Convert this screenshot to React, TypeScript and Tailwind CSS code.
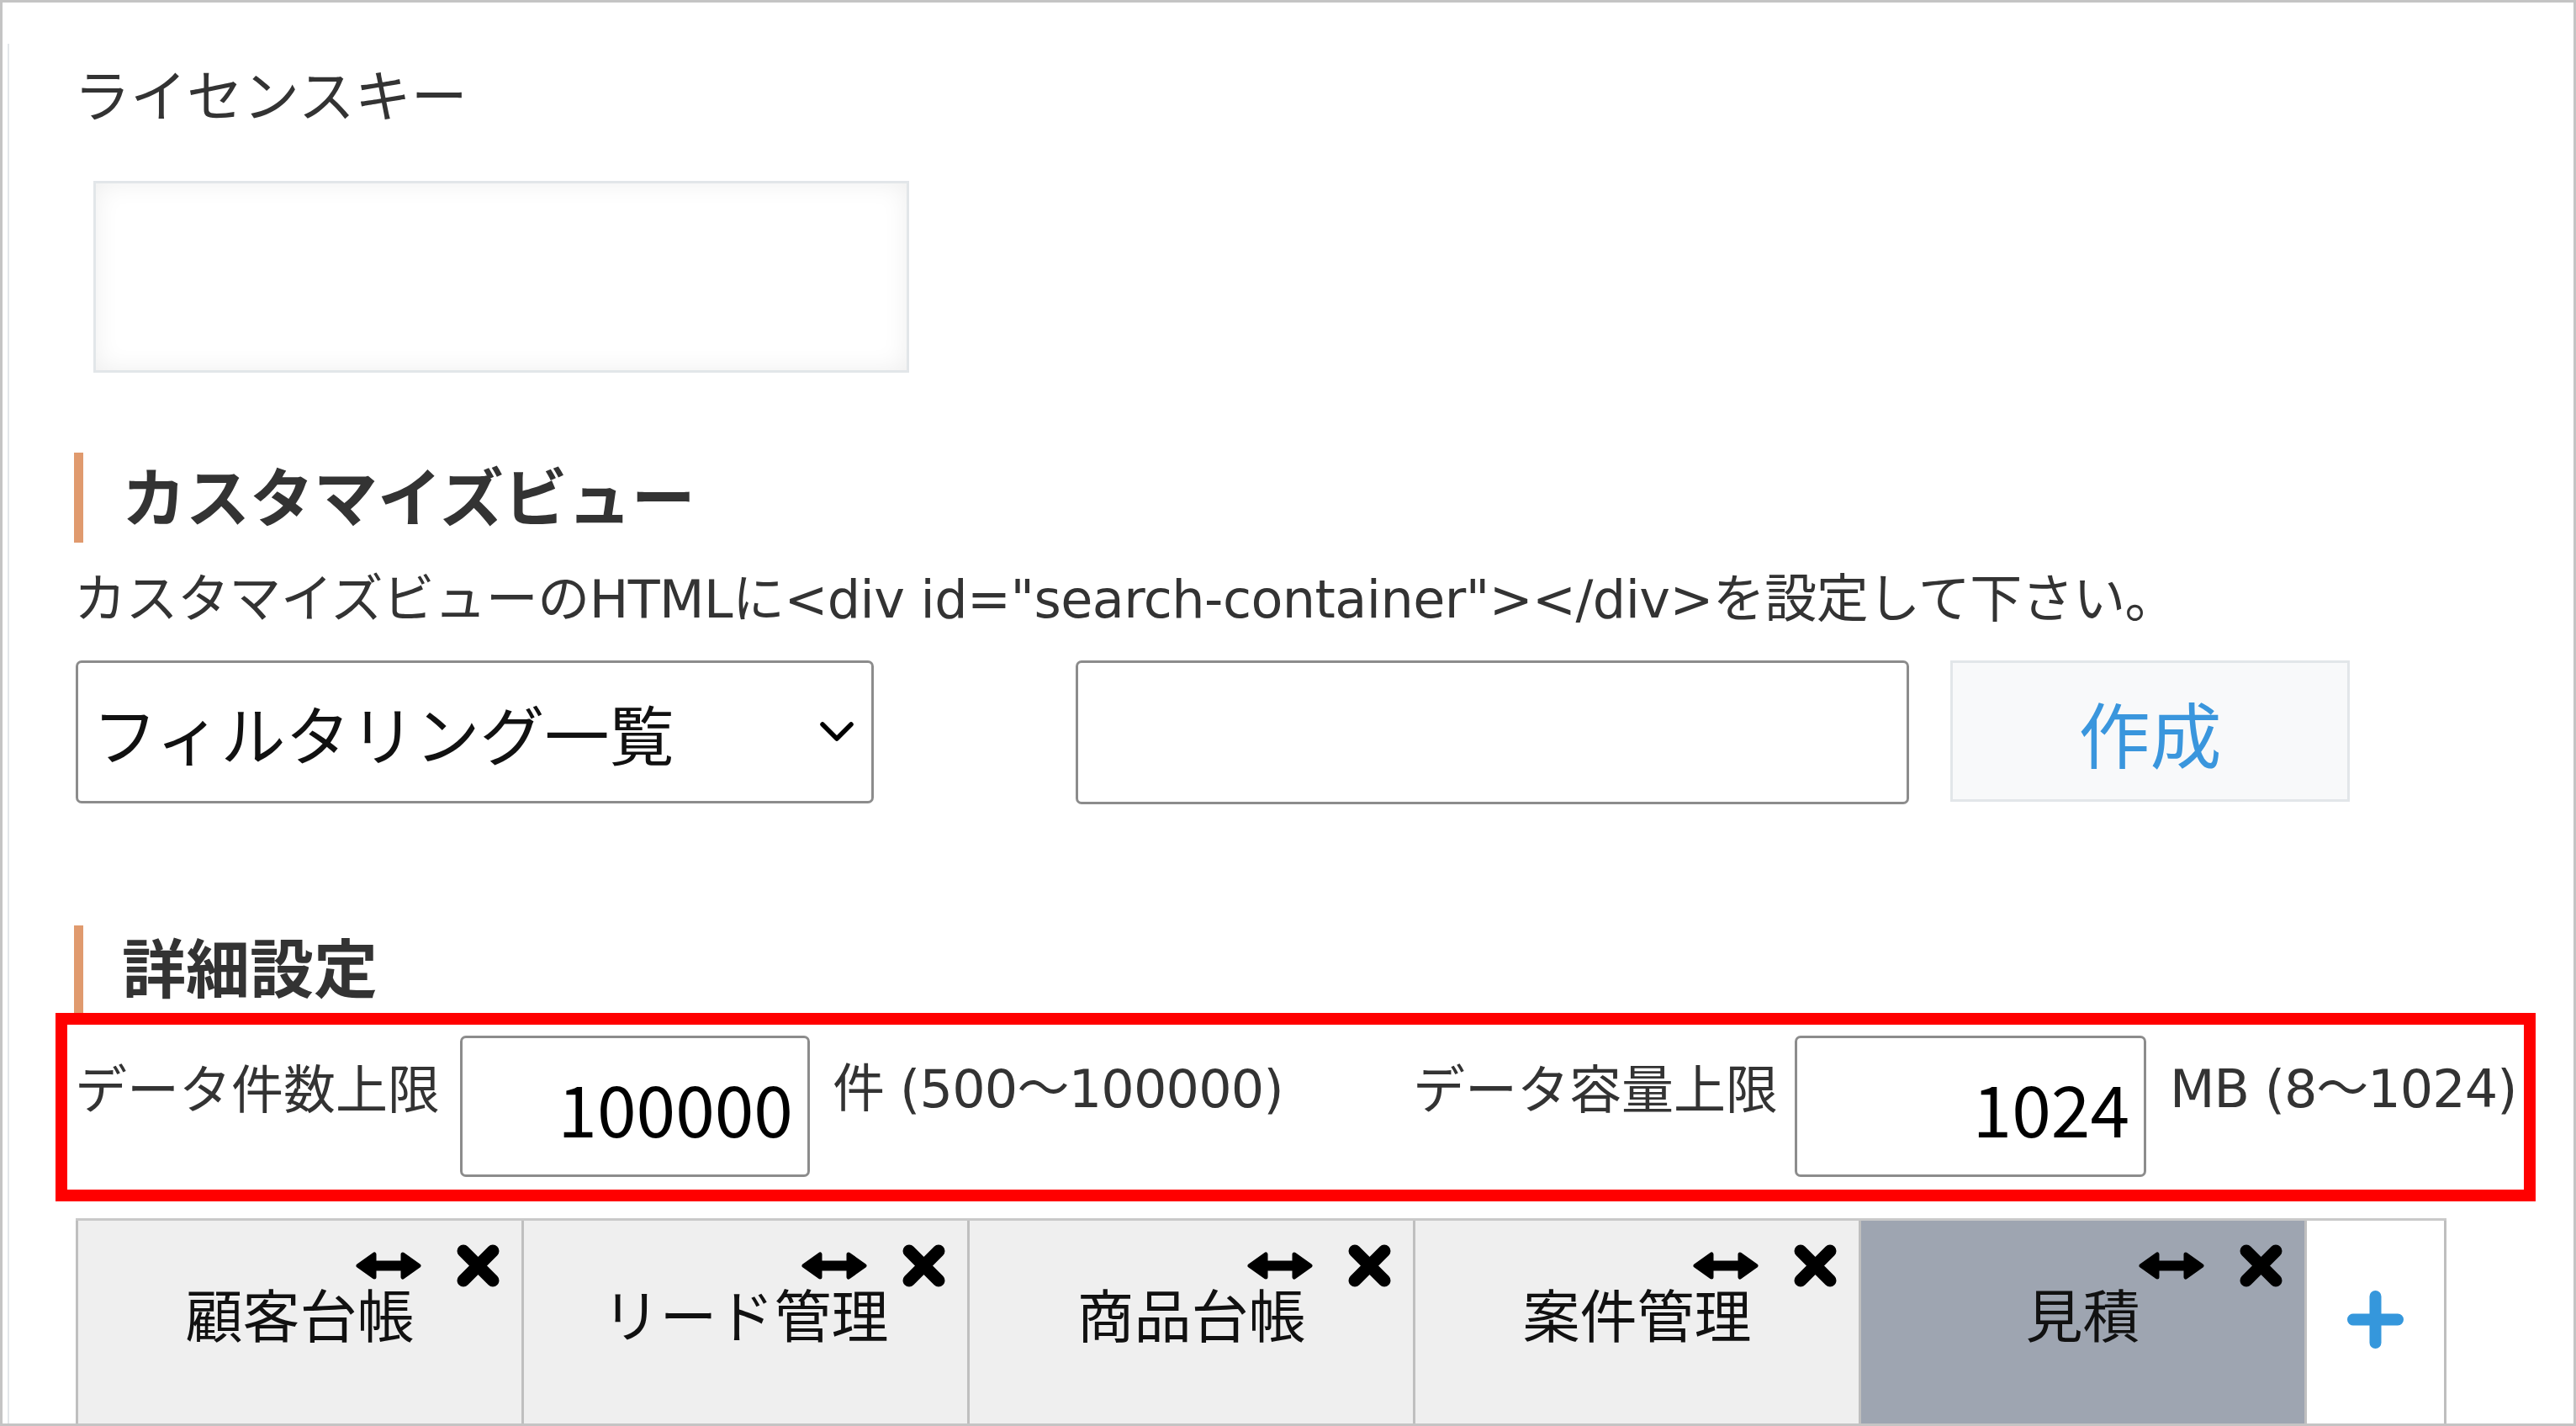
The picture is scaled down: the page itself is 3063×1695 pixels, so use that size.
import React from "react"

const tabs = [
  { label: "顧客台帳", active: false },
  { label: "リード管理", active: false },
  { label: "商品台帳", active: false },
  { label: "案件管理", active: false },
  { label: "見積", active: true },
]

function ArrowsH() {
  return (
    <svg width="78" height="33" viewBox="0 0 78 33">
      <path
        d="M3 16.5 L22 3 L22 13 L56 13 L56 3 L75 16.5 L56 30 L56 20 L22 20 L22 30 Z"
        fill="#000"
        stroke="#000"
        strokeWidth="5"
        strokeLinejoin="round"
      />
    </svg>
  )
}

function Times() {
  return (
    <svg width="53" height="53" viewBox="0 0 53 53">
      <path d="M9 9 L44 44 M44 9 L9 44" stroke="#000" strokeWidth="15" strokeLinecap="round" />
    </svg>
  )
}

function Plus() {
  return (
    <svg width="67" height="69" viewBox="0 0 67 69">
      <path d="M33.5 7 L33.5 62 M7 34.5 L60 34.5" stroke="#3597dc" strokeWidth="14" strokeLinecap="round" />
    </svg>
  )
}

export default function App() {
  return (
    <div className="w-[3063px] h-[1695px] overflow-hidden border-[3px] border-[#c4c4c4] bg-white font-['Noto_Sans_CJK_JP',sans-serif] text-[#333]">
      <div className="mt-[49px] ml-[6px] h-full border-l-2 border-[#e3e7ea] pl-[77px]">
        {/* ライセンスキー */}
        <div className="pt-[24px] text-[67px] leading-none">ライセンスキー</div>
        <div className="mt-[72px] ml-[23px] h-[228px] w-[970px] border-[3px] border-[#e2e6e9] bg-white shadow-[inset_0_0_30px_rgba(0,0,0,0.07)]" />

        {/* カスタマイズビュー */}
        <div className="mt-[95px] flex h-[107px] items-center border-l-[11px] border-[#e09a6e] pb-[10px] pl-[46px]">
          <h2 className="text-[76px] font-bold leading-none">カスタマイズビュー</h2>
        </div>
        <p className="mt-[37px] h-[62px] whitespace-nowrap font-['DejaVu_Sans','Noto_Sans_CJK_JP',sans-serif] text-[62px] leading-none tracking-[-0.55px]">
          カスタマイズビューのHTMLに&lt;div id="search-container"&gt;&lt;/div&gt;を設定して下さい。
        </p>
        <div className="mt-[41px] ml-[2px] flex items-start">
          <div className="relative flex h-[170px] w-[949px] items-center rounded-[7px] border-[3px] border-[#8c8c8c] pl-[17px] text-[77px] leading-none text-[#111]">
            フィルタリング一覧
            <svg className="absolute left-[882px] top-[70px]" width="40" height="24" viewBox="0 0 40 24">
              <path d="M3 3 L20 20 L37 3" fill="none" stroke="#000" strokeWidth="5.5" strokeLinecap="round" strokeLinejoin="round" />
            </svg>
          </div>
          <input
            readOnly
            className="ml-[240px] h-[171px] w-[991px] rounded-[7px] border-[3px] border-[#8c8c8c] bg-white outline-none"
          />
          <button className="ml-[49px] h-[168px] w-[475px] border-[3px] border-[#e2e6e9] bg-[#f8f9fa] text-[85px] leading-none text-[#3a96dd]">
            作成
          </button>
        </div>

        {/* 詳細設定 */}
        <div className="mt-[144px] flex h-[104px] items-center border-l-[11px] border-[#e09a6e] pb-[10px] pl-[46px]">
          <h2 className="text-[76px] font-bold leading-none">詳細設定</h2>
        </div>
        <div className="ml-[-22px] flex h-[224px] w-[2949px] items-start border-[14px] border-[#ff0000] pl-[9px] pt-[13px] text-[62px] leading-none">
          <span className="mt-[29px] w-[458px] whitespace-nowrap">データ件数上限</span>
          <input
            readOnly
            value="100000"
            className="h-[168px] w-[416px] rounded-[7px] border-[3px] border-[#8c8c8c] bg-white pr-[17px] text-right text-[84px] text-black outline-none"
          />
          <span className="mt-[33px] w-[717px] whitespace-nowrap pl-[27px] font-['DejaVu_Sans','Noto_Sans_CJK_JP',sans-serif] tracking-[-0.8px]">
            件 (500〜100000)
          </span>
          <span className="mt-[29px] w-[454px] whitespace-nowrap">データ容量上限</span>
          <input
            readOnly
            value="1024"
            className="h-[168px] w-[418px] rounded-[7px] border-[3px] border-[#8c8c8c] bg-white pr-[17px] text-right text-[84px] text-black outline-none"
          />
          <span className="mt-[33px] whitespace-nowrap pl-[28px] font-['DejaVu_Sans','Noto_Sans_CJK_JP',sans-serif] tracking-[-1px]">
            MB (8〜1024)
          </span>
        </div>

        {/* タブ */}
        <div className="mt-[20px] ml-[2px] flex h-[300px] w-fit border-t-[3px] border-[#c9c9c9]">
          {tabs.map((t) => (
            <div
              key={t.label}
              className={
                t.active
                  ? "relative w-[530px] border-l-[3px] border-[#bfbfbf] bg-[#9ea5b1] pt-[76px] text-center text-[68px] leading-none text-[#111]"
                  : "relative w-[530px] border-l-[3px] border-[#bfbfbf] bg-[#efefef] pt-[76px] text-center text-[68px] leading-none text-[#111]"
              }
            >
              <span className="absolute right-[119px] top-[37px] flex">
                <ArrowsH />
              </span>
              <span className="absolute right-[25px] top-[27px] flex">
                <Times />
              </span>
              {t.label}
            </div>
          ))}
          <div className="flex w-[169px] justify-center border-x-[3px] border-[#bfbfbf] bg-white pt-[83px]">
            <div>
              <Plus />
            </div>
          </div>
        </div>
      </div>
    </div>
  )
}
